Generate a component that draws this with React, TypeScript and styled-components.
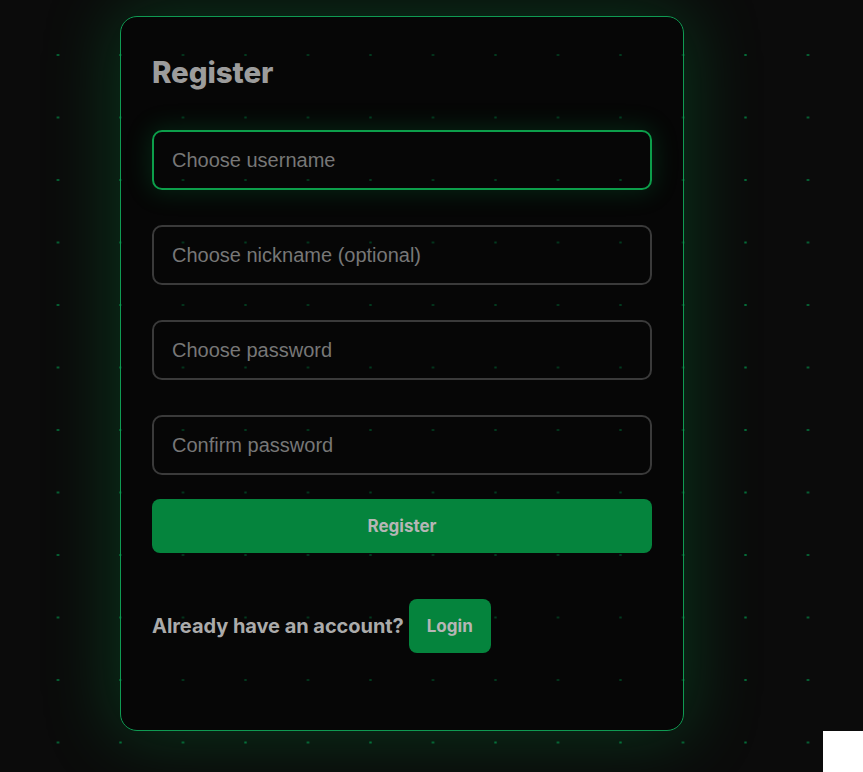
import React from "react";
import styled, { createGlobalStyle } from "styled-components";

const GlobalStyle = createGlobalStyle`
  html, body {
    margin: 0;
    padding: 0;
    background: #0b0b0b;
  }
  * { box-sizing: border-box; }
`;

const Page = styled.div`
  position: relative;
  width: 100%;
  height: 100vh;
  overflow: hidden;
  background-color: #0b0b0b;
  background-image: radial-gradient(
    ellipse 2px 1px at 1.5px 1px,
    rgba(0, 190, 95, 0.75) 0,
    rgba(0, 190, 95, 0.5) 60%,
    transparent 100%
  );
  background-size: 62.5px 62.5px;
  background-position: 56.5px 54px;
  display: flex;
  align-items: flex-start;
  padding: 16px 0 0 120px;
  font-family: Inter, "Liberation Sans", sans-serif;
`;

const Card = styled.div`
  width: 564px;
  border: 1px solid #0f9a52;
  border-radius: 17px;
  background: rgba(0, 0, 0, 0.45);
  box-shadow: 0 0 70px 6px rgba(0, 170, 75, 0.26);
  padding: 38px 31px 77px;
  display: flex;
  flex-direction: column;
`;

const Title = styled.h2`
  margin: 0 0 40px;
  font-size: 29.5px;
  line-height: 35px;
  font-weight: 800;
  color: #9c9c9c;
  letter-spacing: -0.1px;
`;

const Fields = styled.div`
  display: flex;
  flex-direction: column;
  gap: 35px;
`;

const Input = styled.input<{ $focused?: boolean }>`
  width: 100%;
  height: 60px;
  padding: 0 18px;
  border-radius: 10px;
  border: 2px solid ${(p) => (p.$focused ? "#0c9e4a" : "#3a3a3a")};
  background: transparent;
  box-shadow: ${(p) => (p.$focused ? "0 0 24px 3px rgba(0, 170, 75, 0.18)" : "none")};
  font-family: "Liberation Sans", Arial, sans-serif;
  font-size: 20px;
  color: #cfcfcf;
  outline: none;
  &::placeholder {
    color: #777777;
  }
`;

const Button = styled.button<{ $wide?: boolean }>`
  height: 54px;
  border: none;
  border-radius: 8px;
  background: #05843d;
  color: #b6b6b6;
  font-family: Inter, "Liberation Sans", sans-serif;
  font-weight: 700;
  font-size: 17px;
  cursor: pointer;
  width: ${(p) => (p.$wide ? "100%" : "auto")};
  padding: ${(p) => (p.$wide ? "0" : "0 18px")};
  margin-top: ${(p) => (p.$wide ? "24px" : "0")};
`;

const Footer = styled.div`
  margin-top: 46px;
  display: flex;
  align-items: center;
  gap: 5px;
`;

const FooterText = styled.span`
  font-size: 20px;
  font-weight: 700;
  color: #ababab;
  letter-spacing: -0.05px;
`;

const Corner = styled.div`
  position: absolute;
  right: 0;
  bottom: 0;
  width: 40px;
  height: 41px;
  background: #ffffff;
`;

export default function App() {
  return (
    <>
      <GlobalStyle />
      <Page>
        <Card>
          <Title>Register</Title>
          <Fields>
            <Input $focused placeholder="Choose username" />
            <Input placeholder="Choose nickname (optional)" />
            <Input type="password" placeholder="Choose password" />
            <Input type="password" placeholder="Confirm password" />
          </Fields>
          <Button $wide>Register</Button>
          <Footer>
            <FooterText>Already have an account?</FooterText>
            <Button>Login</Button>
          </Footer>
        </Card>
        <Corner />
      </Page>
    </>
  );
}
